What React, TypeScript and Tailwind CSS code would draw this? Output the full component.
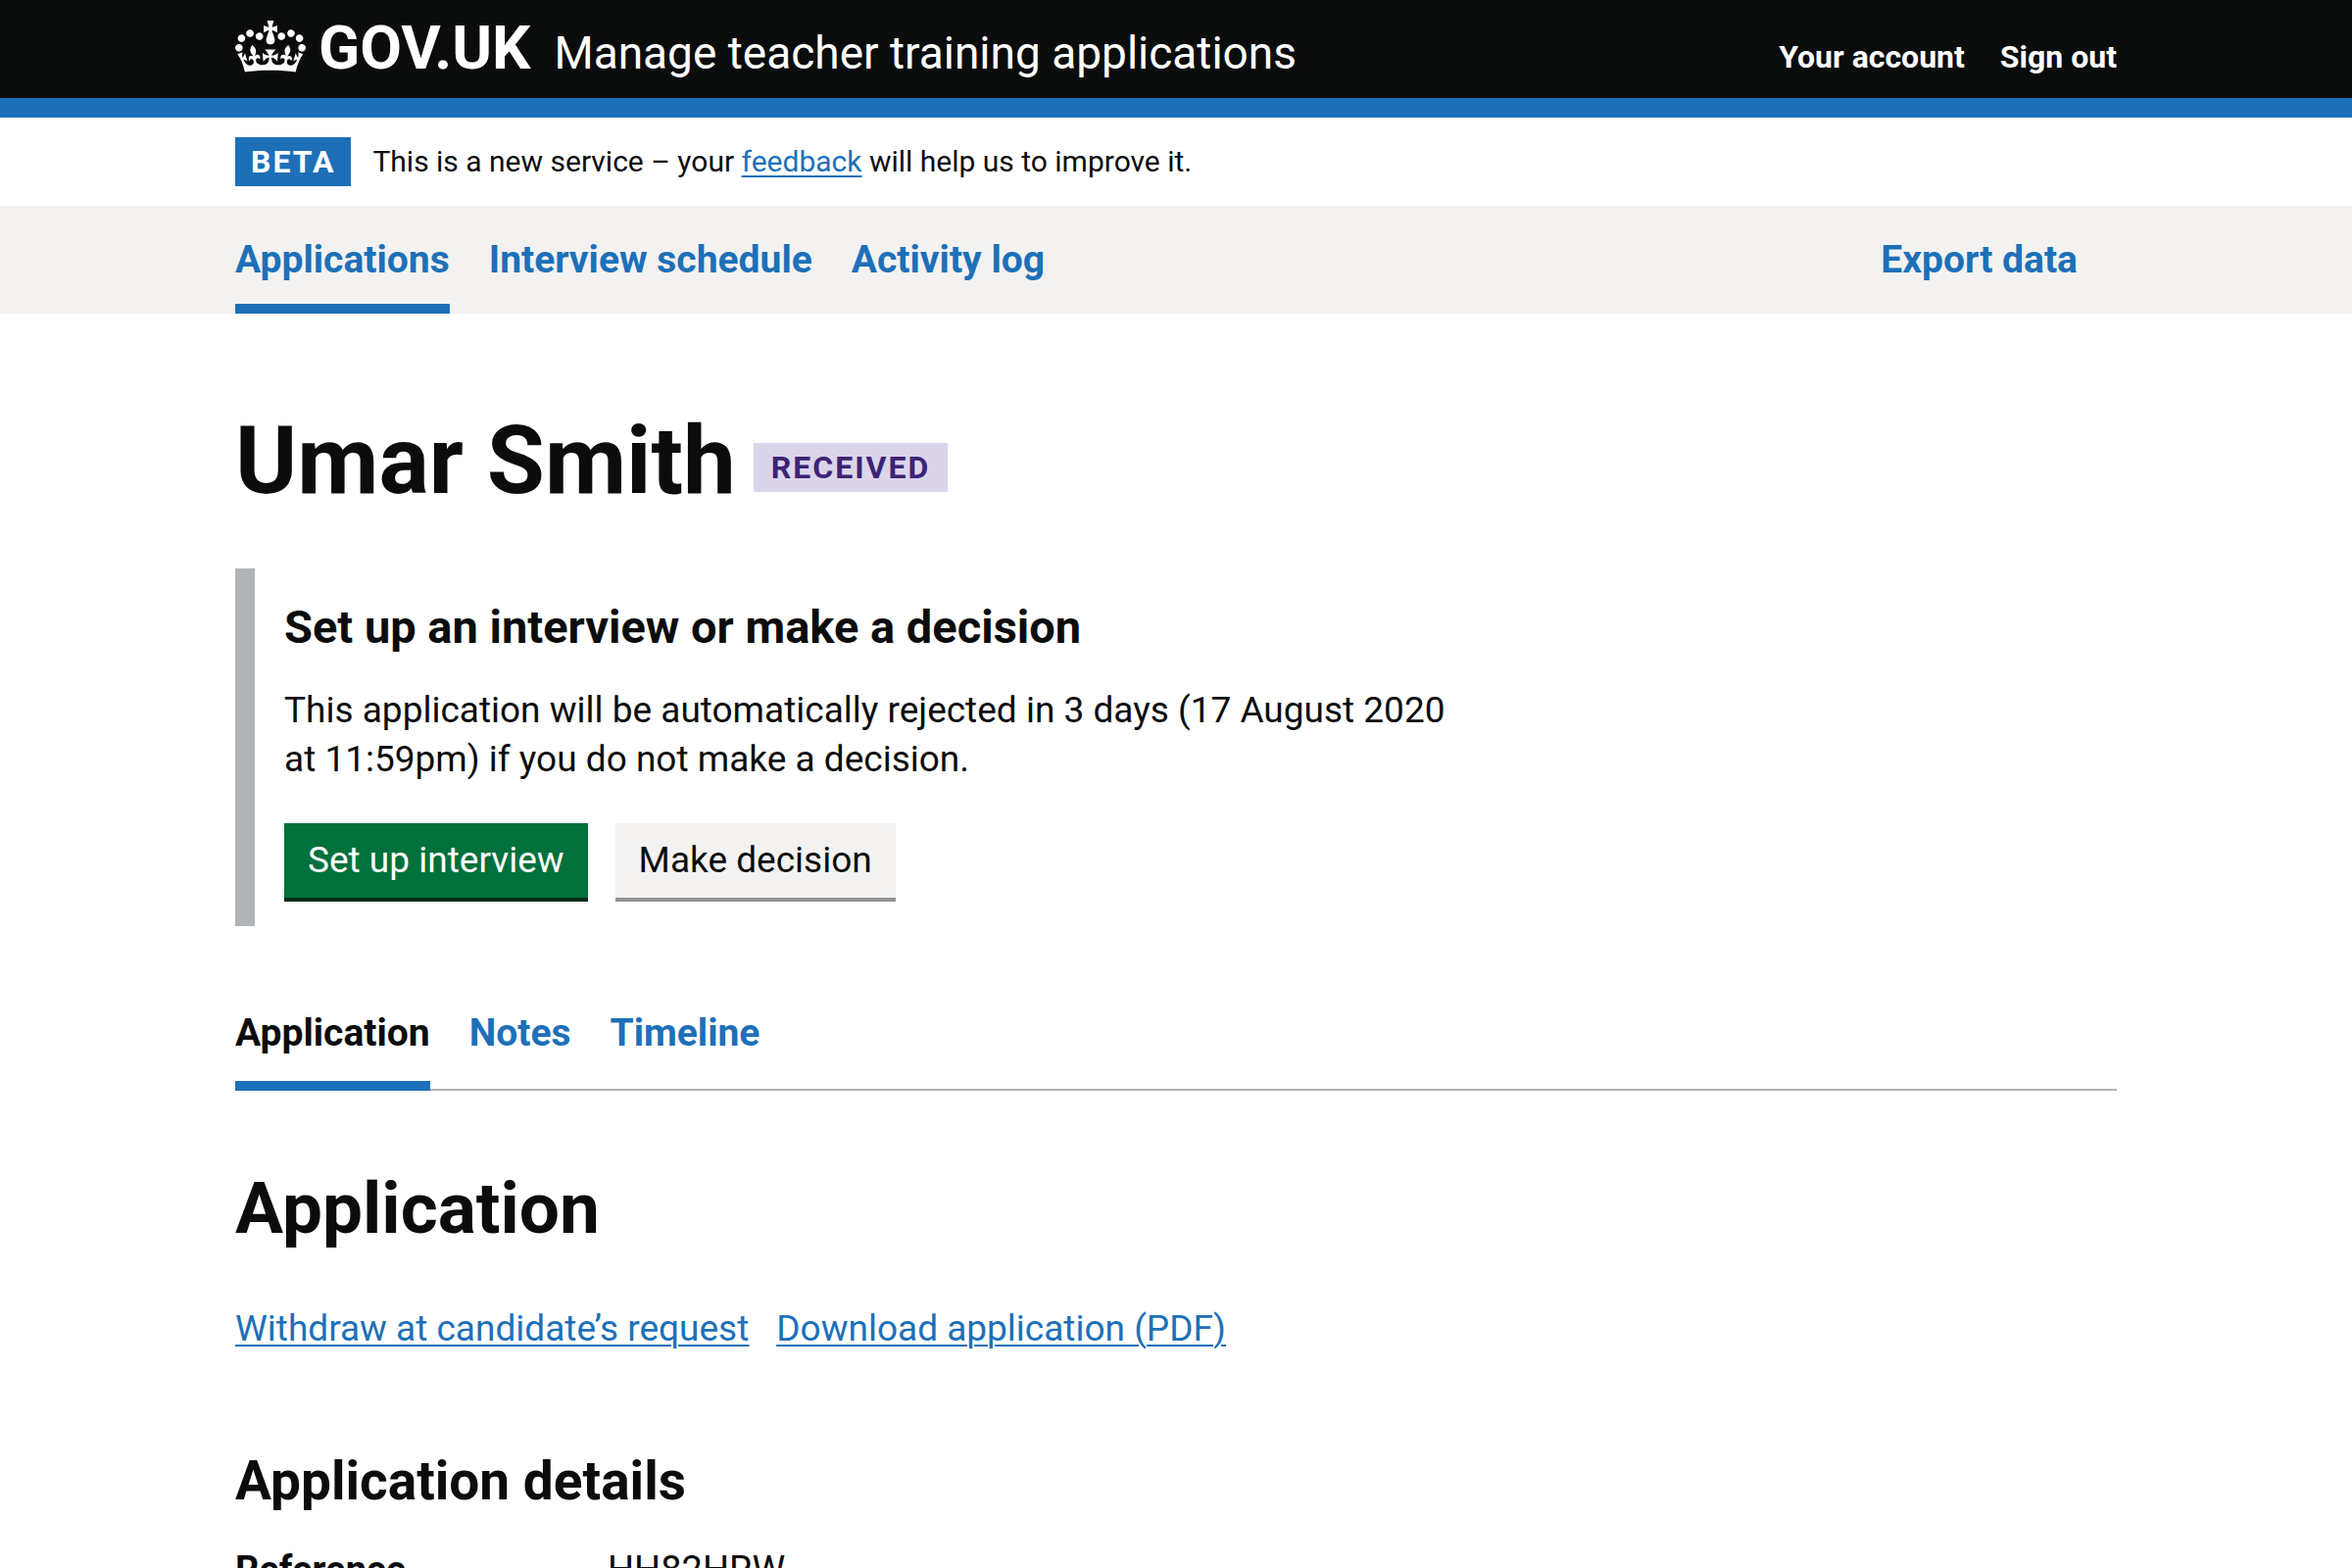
import type { ReactNode } from "react";

function Container({ children, className = "" }: { children: ReactNode; className?: string }) {
  return <div className={`mx-auto w-full max-w-[1920px] ${className}`}>{children}</div>;
}

function Crown() {
  return (
    <svg viewBox="0 0 132 97" className="mt-[21px] h-[53px] w-[72px]" fill="currentColor" aria-hidden="true">
      <path
        fillRule="evenodd"
        d="M25 30.2c3.5 1.5 7.7-.2 9.1-3.7 1.5-3.6-.2-7.8-3.9-9.2-3.6-1.4-7.6.3-9.1 3.9-1.4 3.5.3 7.5 3.9 9zM9 39.5c3.6 1.5 7.8-.2 9.2-3.7 1.5-3.6-.2-7.8-3.9-9.1-3.6-1.5-7.6.2-9.1 3.8-1.4 3.5.3 7.5 3.8 9zM4.4 57.2c3.5 1.5 7.7-.2 9.1-3.8 1.5-3.6-.2-7.7-3.9-9.1-3.5-1.5-7.6.3-9.1 3.8-1.4 3.5.3 7.6 3.9 9.1zm38.3-21.4c3.5 1.5 7.7-.2 9.1-3.8 1.5-3.6-.2-7.7-3.9-9.1-3.6-1.5-7.6.3-9.1 3.8-1.3 3.6.4 7.7 3.9 9.1zm64.4-5.6c-3.6 1.5-7.8-.2-9.1-3.7-1.5-3.6.2-7.8 3.8-9.2 3.6-1.4 7.7.3 9.2 3.9 1.3 3.5-.4 7.5-3.9 9zm15.9 9.3c-3.6 1.5-7.7-.2-9.1-3.7-1.5-3.6.2-7.8 3.7-9.1 3.6-1.5 7.7.2 9.2 3.8 1.5 3.5-.3 7.5-3.8 9zm4.7 17.7c-3.6 1.5-7.8-.2-9.2-3.8-1.5-3.6.2-7.7 3.9-9.1 3.6-1.5 7.7.3 9.2 3.8 1.3 3.5-.4 7.6-3.9 9.1zM89.3 35.8c-3.6 1.5-7.8-.2-9.2-3.8-1.4-3.6.2-7.7 3.9-9.1 3.6-1.5 7.7.3 9.2 3.8 1.4 3.6-.3 7.7-3.9 9.1zM69.7 17.7l8.9 4.7V9.3l-8.9 2.8c-.2-.3-.5-.6-.9-.9L72.4 0H59.6l3.5 11.2c-.3.3-.6.5-.9.9l-8.8-2.8v13.1l8.8-4.7c.3.3.6.7.9.9l-5 15.4v.1c-.2.8-.4 1.6-.4 2.4 0 4.1 3.1 7.5 7 8.1h.2c.3 0 .7.1 1 .1.4 0 .7 0 1-.1h.2c4-.6 7.1-4.1 7.1-8.1 0-.8-.1-1.7-.4-2.4V34l-5.1-15.4c.4-.2.7-.6 1-.9zM66 92.8c16.9 0 32.8 1.1 47.1 3.2 4-16.9 8.9-26.7 14-33.5l-9.6-3.4c1 4.9 1.1 7.2 0 10.2-1.5-1.4-3-4.3-4.2-8.7L108.6 76c2.8-2 5-3.2 7.5-3.3-4.4 9.4-10 11.9-13.6 11.2-4.3-.8-6.3-4.6-5.6-7.9 1-4.7 5.7-5.9 8-.5 4.3-8.7-3-11.4-7.6-8.8 7.1-7.2 7.9-13.5 2.1-21.1-8 6.1-8.1 12.3-4.5 20.8-4.7-5.4-12.1-2.5-9.5 6.2 3.4-5.2 7.9-2 7.2 3.1-.6 4.3-6.4 7.8-13.5 7.2-10.3-.9-10.9-8-11.2-13.8 2.5-.5 7.1 1.8 11 7.3L80.2 60c-4.1 4.4-8 5.3-12.3 5.4 1.4-4.4 8-11.6 8-11.6H55.5s6.4 7.2 7.9 11.6c-4.2-.1-8-1-12.3-5.4l1.4 16.4c3.9-5.5 8.5-7.7 10.9-7.3-.3 5.8-.9 12.8-11.1 13.8-7.2.6-12.9-2.9-13.5-7.2-.7-5 3.8-8.3 7.1-3.1 2.7-8.7-4.6-11.6-9.4-6.2 3.7-8.5 3.6-14.7-4.6-20.8-5.8 7.6-5 13.9 2.2 21.1-4.7-2.6-11.9.1-7.7 8.8 2.3-5.5 7.1-4.2 8.1.5.7 3.3-1.3 7.1-5.7 7.9-3.5.7-9-1.8-13.5-11.2 2.5.1 4.7 1.3 7.5 3.3l-4.7-15.4c-1.2 4.4-2.7 7.2-4.3 8.7-1.1-3-.9-5.3 0-10.2l-9.5 3.4c5 6.9 9.9 16.7 14 33.5 14.8-2.1 30.8-3.2 47.7-3.2z"
      />
    </svg>
  );
}

function Header() {
  return (
    <header className="bg-[#0b0c0c] text-white">
      <Container className="flex h-[100px] items-start justify-between">
        <div className="flex items-start">
          <a href="#home" className="flex items-start gap-[13px]">
            <Crown />
            <span className="pt-[14px] text-[62px] leading-[70px] font-bold">GOV.UK</span>
          </a>
          <a href="#service" className="ml-[24px] pt-[24px] text-[46px] leading-[60px]">
            Manage teacher training applications
          </a>
        </div>
        <nav aria-label="Account" className="flex gap-[36px] pt-[38px] text-[32px] leading-[40px] font-bold">
          <a href="#account">Your account</a>
          <a href="#signout">Sign out</a>
        </nav>
      </Container>
      <div className="h-[20px] bg-[#1d70b8]" />
    </header>
  );
}

function PhaseBanner() {
  return (
    <Container className="flex items-center gap-[22px] py-[20px]">
      <strong className="bg-[#1d70b8] px-[16px] text-[32px] leading-[50px] font-bold tracking-[2px] text-white">BETA</strong>
      <p className="text-[30px] leading-[50px]">
        This is a new service – your{" "}
        <a href="#feedback" className="text-[#1d70b8] underline decoration-2 underline-offset-4">feedback</a> will help us to
        improve it.
      </p>
    </Container>
  );
}

function PrimaryNav() {
  return (
    <nav aria-label="Primary" className="bg-[#f3f2f1] text-[39px] leading-[50px] font-bold text-[#1d70b8]">
      <Container className="flex justify-between">
        <div className="flex gap-[40px]">
          <a href="#applications" aria-current="page" className="border-b-[10px] border-[#1d70b8] pt-[30px] pb-[20px]">
            Applications
          </a>
          <a href="#interviews" className="pt-[30px]">Interview schedule</a>
          <a href="#activity" className="pt-[30px]">Activity log</a>
        </div>
        <a href="#export" className="mr-[40px] pt-[30px]">Export data</a>
      </Container>
    </nav>
  );
}

function Decision() {
  return (
    <section className="mt-[60px] w-2/3 border-l-[20px] border-[#b1b4b6] pt-[30px] pr-[30px] pb-[25px] pl-[30px]">
      <h2 className="text-[47px] leading-[60px] font-bold">Set up an interview or make a decision</h2>
      <p className="mt-[30px] text-[37px] leading-[50px]">
        This application will be automatically rejected in 3 days (17 August 2020 at 11:59pm) if you do not make a decision.
      </p>
      <div className="mt-[40px] flex gap-[28px] text-[37px]">
        <button type="button" className="h-[80px] border-b-4 border-[#002d18] bg-[#00703c] px-[24px] text-white">
          Set up interview
        </button>
        <button type="button" className="h-[80px] border-b-4 border-[#929191] bg-[#f3f2f1] px-[24px]">
          Make decision
        </button>
      </div>
    </section>
  );
}

function SubNav() {
  return (
    <nav
      aria-label="Application sections"
      className="mt-[54px] flex gap-[40px] text-[39px] leading-[50px] font-bold text-[#1d70b8] shadow-[inset_0_-2px_0_#b1b4b6]"
    >
      <a href="#application" aria-current="page" className="border-b-[10px] border-[#1d70b8] pt-[30px] pb-[24px] text-[#0b0c0c]">
        Application
      </a>
      <a href="#notes" className="pt-[30px]">Notes</a>
      <a href="#timeline" className="pt-[30px]">Timeline</a>
    </nav>
  );
}

export default function App() {
  return (
    <div className="h-screen overflow-hidden bg-white font-[Roboto,'Liberation_Sans',sans-serif] text-[#0b0c0c]">
      <Header />
      <PhaseBanner />
      <PrimaryNav />
      <Container>
        <main className="pt-[100px]">
          <h1 className="flex items-end gap-[18px] text-[96px] leading-[100px] font-bold">
            Umar Smith
            <strong className="mb-[18px] bg-[#dbd5e9] px-[18px] text-[32px] leading-[50px] font-bold tracking-[2px] text-[#3d2375]">
              RECEIVED
            </strong>
          </h1>
          <Decision />
          <SubNav />
          <h2 className="mt-[80px] text-[73px] leading-[80px] font-bold">Application</h2>
          <div className="mt-[58px] flex gap-[28px] text-[37px] leading-[50px] text-[#1d70b8] underline decoration-2 underline-offset-4">
            <a href="#withdraw">Withdraw at candidate’s request</a>
            <a href="#download">Download application (PDF)</a>
          </div>
          <h3 className="mt-[100px] text-[55px] leading-[60px] font-bold">Application details</h3>
          <dl className="mt-[36px] grid grid-cols-[380px_1fr] text-[38px] leading-[50px]">
            <dt className="font-bold">Reference</dt>
            <dd>HH82HRW</dd>
          </dl>
        </main>
      </Container>
    </div>
  );
}
